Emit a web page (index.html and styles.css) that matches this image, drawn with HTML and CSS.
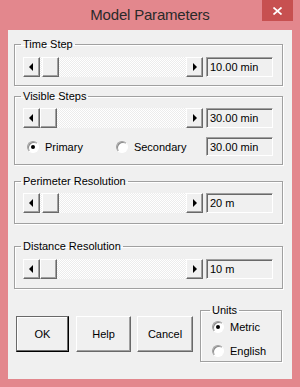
FILE: index.html
```html
<!DOCTYPE html>
<html>
<head>
<title>Model Parameters</title>
<link rel="stylesheet" href="styles.css">
</head>
<body>
<div class="window">
    <div class="titlebar">
        <span class="title">Model Parameters</span>
        <span class="close">
            <svg width="9" height="8" viewBox="0 0 9 8"><path d="M0.5 0.5 L8.5 7.5 M8.5 0.5 L0.5 7.5" stroke="#fff" stroke-width="1.7" fill="none"/></svg>
        </span>
    </div>
    <div class="client">
        <fieldset class="group timestep">
            <legend>Time Step</legend>
            <div class="row">
                <div class="scroll">
                    <div class="arrow left"><span></span></div>
                    <div class="track"><div class="thumb gap"></div></div>
                    <div class="arrow right"><span></span></div>
                </div>
                <div class="field">10.00 min</div>
            </div>
        </fieldset>
        <fieldset class="group visible">
            <legend>Visible Steps</legend>
            <div class="row">
                <div class="scroll">
                    <div class="arrow left"><span></span></div>
                    <div class="track"><div class="thumb"></div></div>
                    <div class="arrow right"><span></span></div>
                </div>
                <div class="field">30.00 min</div>
            </div>
            <div class="row radios">
                <label class="radio primary"><span class="dot on"></span>Primary</label>
                <label class="radio secondary"><span class="dot"></span>Secondary</label>
                <div class="field">30.00 min</div>
            </div>
        </fieldset>
        <fieldset class="group perimeter">
            <legend>Perimeter Resolution</legend>
            <div class="row">
                <div class="scroll">
                    <div class="arrow left"><span></span></div>
                    <div class="track"><div class="thumb gap"></div></div>
                    <div class="arrow right"><span></span></div>
                </div>
                <div class="field">20 m</div>
            </div>
        </fieldset>
        <fieldset class="group distance">
            <legend>Distance Resolution</legend>
            <div class="row">
                <div class="scroll">
                    <div class="arrow left"><span></span></div>
                    <div class="track"><div class="thumb"></div></div>
                    <div class="arrow right"><span></span></div>
                </div>
                <div class="field">10 m</div>
            </div>
        </fieldset>
        <div class="bottom">
            <button class="btn ok">OK</button>
            <button class="btn help">Help</button>
            <button class="btn cancel">Cancel</button>
            <fieldset class="units">
                <legend>Units</legend>
                <label class="radio"><span class="dot on"></span>Metric</label>
                <label class="radio"><span class="dot"></span>English</label>
            </fieldset>
        </div>
    </div>
</div>
</body>
</html>
```

FILE: styles.css
```css
body {
    margin: 0;
    background-color: #e3878d;
}

.window {
    width: 300px;
    height: 387px;
    background-color: #e3878d;
    font-family: "Liberation Sans", Arial, sans-serif;
    font-size: 11px;
    color: #000;
}

.titlebar {
    position: relative;
    height: 30px;
    display: flex;
    justify-content: center;
    align-items: center;
}

.title {
    font-size: 15px;
    color: #2a2a2a;
    letter-spacing: -0.2px;
    padding-bottom: 1px;
}

.close {
    position: absolute;
    top: 0;
    right: 7px;
    width: 31px;
    height: 21px;
    background-color: #c75050;
    display: flex;
    justify-content: center;
    align-items: center;
}

.client {
    margin: 0 8px;
    height: 349px;
    background-color: #f0f0f0;
    box-sizing: border-box;
    padding-top: 8px;
}

.group, .units {
    margin: 0;
    border: 1px solid #a0a0a0;
    box-shadow: 1px 1px 0 #fff, inset 1px 1px 0 #fff;
    min-width: 0;
}

.group {
    margin-left: 6px;
    margin-right: 9px;
    padding: 6px 9px 8px 8px;
}

legend {
    line-height: 13px;
    padding: 0 2px;
    margin-left: -2px;
}

.visible {
    margin-top: 4px;
    padding-top: 5px;
    padding-bottom: 8px;
}

.perimeter {
    margin-top: 10px;
    padding-top: 5px;
    padding-bottom: 10px;
}

.distance {
    margin-top: 16px;
    padding-top: 6px;
    padding-bottom: 9px;
}

.row {
    display: flex;
    align-items: center;
}

.scroll {
    width: 180px;
    height: 20px;
    display: flex;
}

.arrow, .thumb, .btn {
    box-sizing: border-box;
    background-color: #f0f0f0;
    border: 1px solid;
    border-color: #fff #696969 #696969 #fff;
    box-shadow: inset -1px -1px 0 #a0a0a0;
}

.arrow {
    width: 17px;
    height: 20px;
    display: flex;
    justify-content: center;
    align-items: center;
}

.arrow span {
    width: 0;
    height: 0;
    border-top: 4px solid transparent;
    border-bottom: 4px solid transparent;
}

.arrow.left span {
    border-right: 4px solid #000;
    margin-right: 1px;
}

.arrow.right span {
    border-left: 4px solid #000;
    margin-left: 1px;
}

.track {
    flex: 1;
    display: flex;
    background-color: #fafafa;
    background-image: repeating-conic-gradient(#ffffff 0 25%, #ececec 0 50%);
    background-size: 2px 2px;
}

.thumb {
    width: 17px;
    height: 20px;
}

.thumb.gap {
    margin-left: 2px;
}

.field {
    box-sizing: border-box;
    width: 67px;
    height: 20px;
    margin-left: 3px;
    border: 1px solid;
    border-color: #a0a0a0 #fff #fff #a0a0a0;
    box-shadow: inset 1px 1px 0 #696969;
    padding: 2px 0 0 3px;
    line-height: 14px;
}

.radios {
    margin-top: 9px;
}

.radios .field {
    height: 19px;
    margin-left: auto;
}

.radio {
    display: flex;
    align-items: center;
}

.dot {
    box-sizing: border-box;
    width: 12px;
    height: 12px;
    border-radius: 50%;
    border: 1px solid;
    border-color: #a0a0a0 #fff #fff #a0a0a0;
    background-color: #fff;
    box-shadow: inset 1px 1px 0 #8a8a8a;
    margin-right: 6px;
    display: flex;
    justify-content: center;
    align-items: center;
}

.dot.on::after {
    content: '';
    width: 4px;
    height: 4px;
    border-radius: 50%;
    background-color: #000;
}

.primary {
    margin-left: 4px;
}

.secondary {
    margin-left: 33px;
}

.bottom {
    display: flex;
    align-items: flex-start;
    margin-top: 13px;
}

.btn {
    font-family: "Liberation Sans", Arial, sans-serif;
    font-size: 11px;
    color: #000;
    height: 36px;
    margin-top: 14px;
    padding: 0;
}

.ok {
    width: 53px;
    margin-left: 8px;
    border-color: #696969 #000 #000 #696969;
    box-shadow: inset -1px -1px 0 #696969, inset 1px 1px 0 #fff;
}

.help {
    width: 55px;
    margin-left: 7px;
}

.cancel {
    width: 56px;
    margin-left: 6px;
}

.units {
    width: 82px;
    height: 58px;
    box-sizing: border-box;
    margin-left: 7px;
    margin-top: 2px;
    padding: 4px 0 0 11px;
}

.units .radio + .radio {
    margin-top: 12px;
}
```
